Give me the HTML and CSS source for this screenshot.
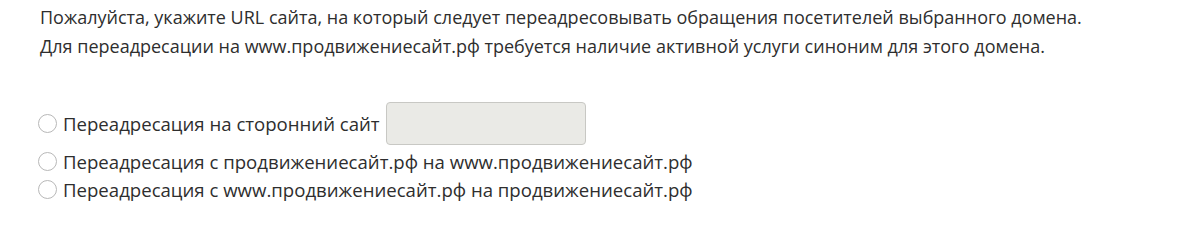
FILE: index.html
```html
<!DOCTYPE html>
<html lang="ru">
<head>
<meta charset="utf-8">
<link rel="stylesheet" href="styles.css">
</head>
<body>
<div class="page">
  <p class="intro">Пожалуйста, укажите URL сайта, на который следует переадресовывать обращения посетителей выбранного домена.<br>Для переадресации на www.продвижениесайт.рф требуется наличие активной услуги синоним для этого домена.</p>
  <div class="options">
    <label class="opt opt-first"><span class="radio"></span><span class="lbl">Переадресация на сторонний сайт</span><span class="field"></span></label>
    <label class="opt"><span class="radio"></span><span class="lbl">Переадресация с продвижениесайт.рф на www.продвижениесайт.рф</span></label>
    <label class="opt"><span class="radio"></span><span class="lbl">Переадресация с www.продвижениесайт.рф на продвижениесайт.рф</span></label>
  </div>
</div>
</body>
</html>
```
FILE: styles.css
```css
html, body { margin: 0; padding: 0; background: #fff; }
.page {
  padding: 3px 0 0 40px;
  font-family: "Open Sans", sans-serif;
  color: #2e2e2e;
}
.intro { margin: 0; font-size: 18px; line-height: 29px; }
.options { margin-top: 40px; display: flex; flex-direction: column; font-size: 18.6px; }
.opt { display: flex; align-items: center; gap: 6px; margin-left: -2px; height: 28px; }
.opt-first { height: 44px; margin-bottom: 2px; }
.radio {
  width: 19px; height: 19px; border-radius: 50%;
  border: 1px solid #b8b8b8; box-sizing: border-box; background: #fff;
  flex: none;
}
.field {
  width: 200px; height: 43px; box-sizing: border-box;
  border: 1px solid #c8c8c4; border-radius: 4px; background: #eaeae6;
  margin-left: 0;
}
```
